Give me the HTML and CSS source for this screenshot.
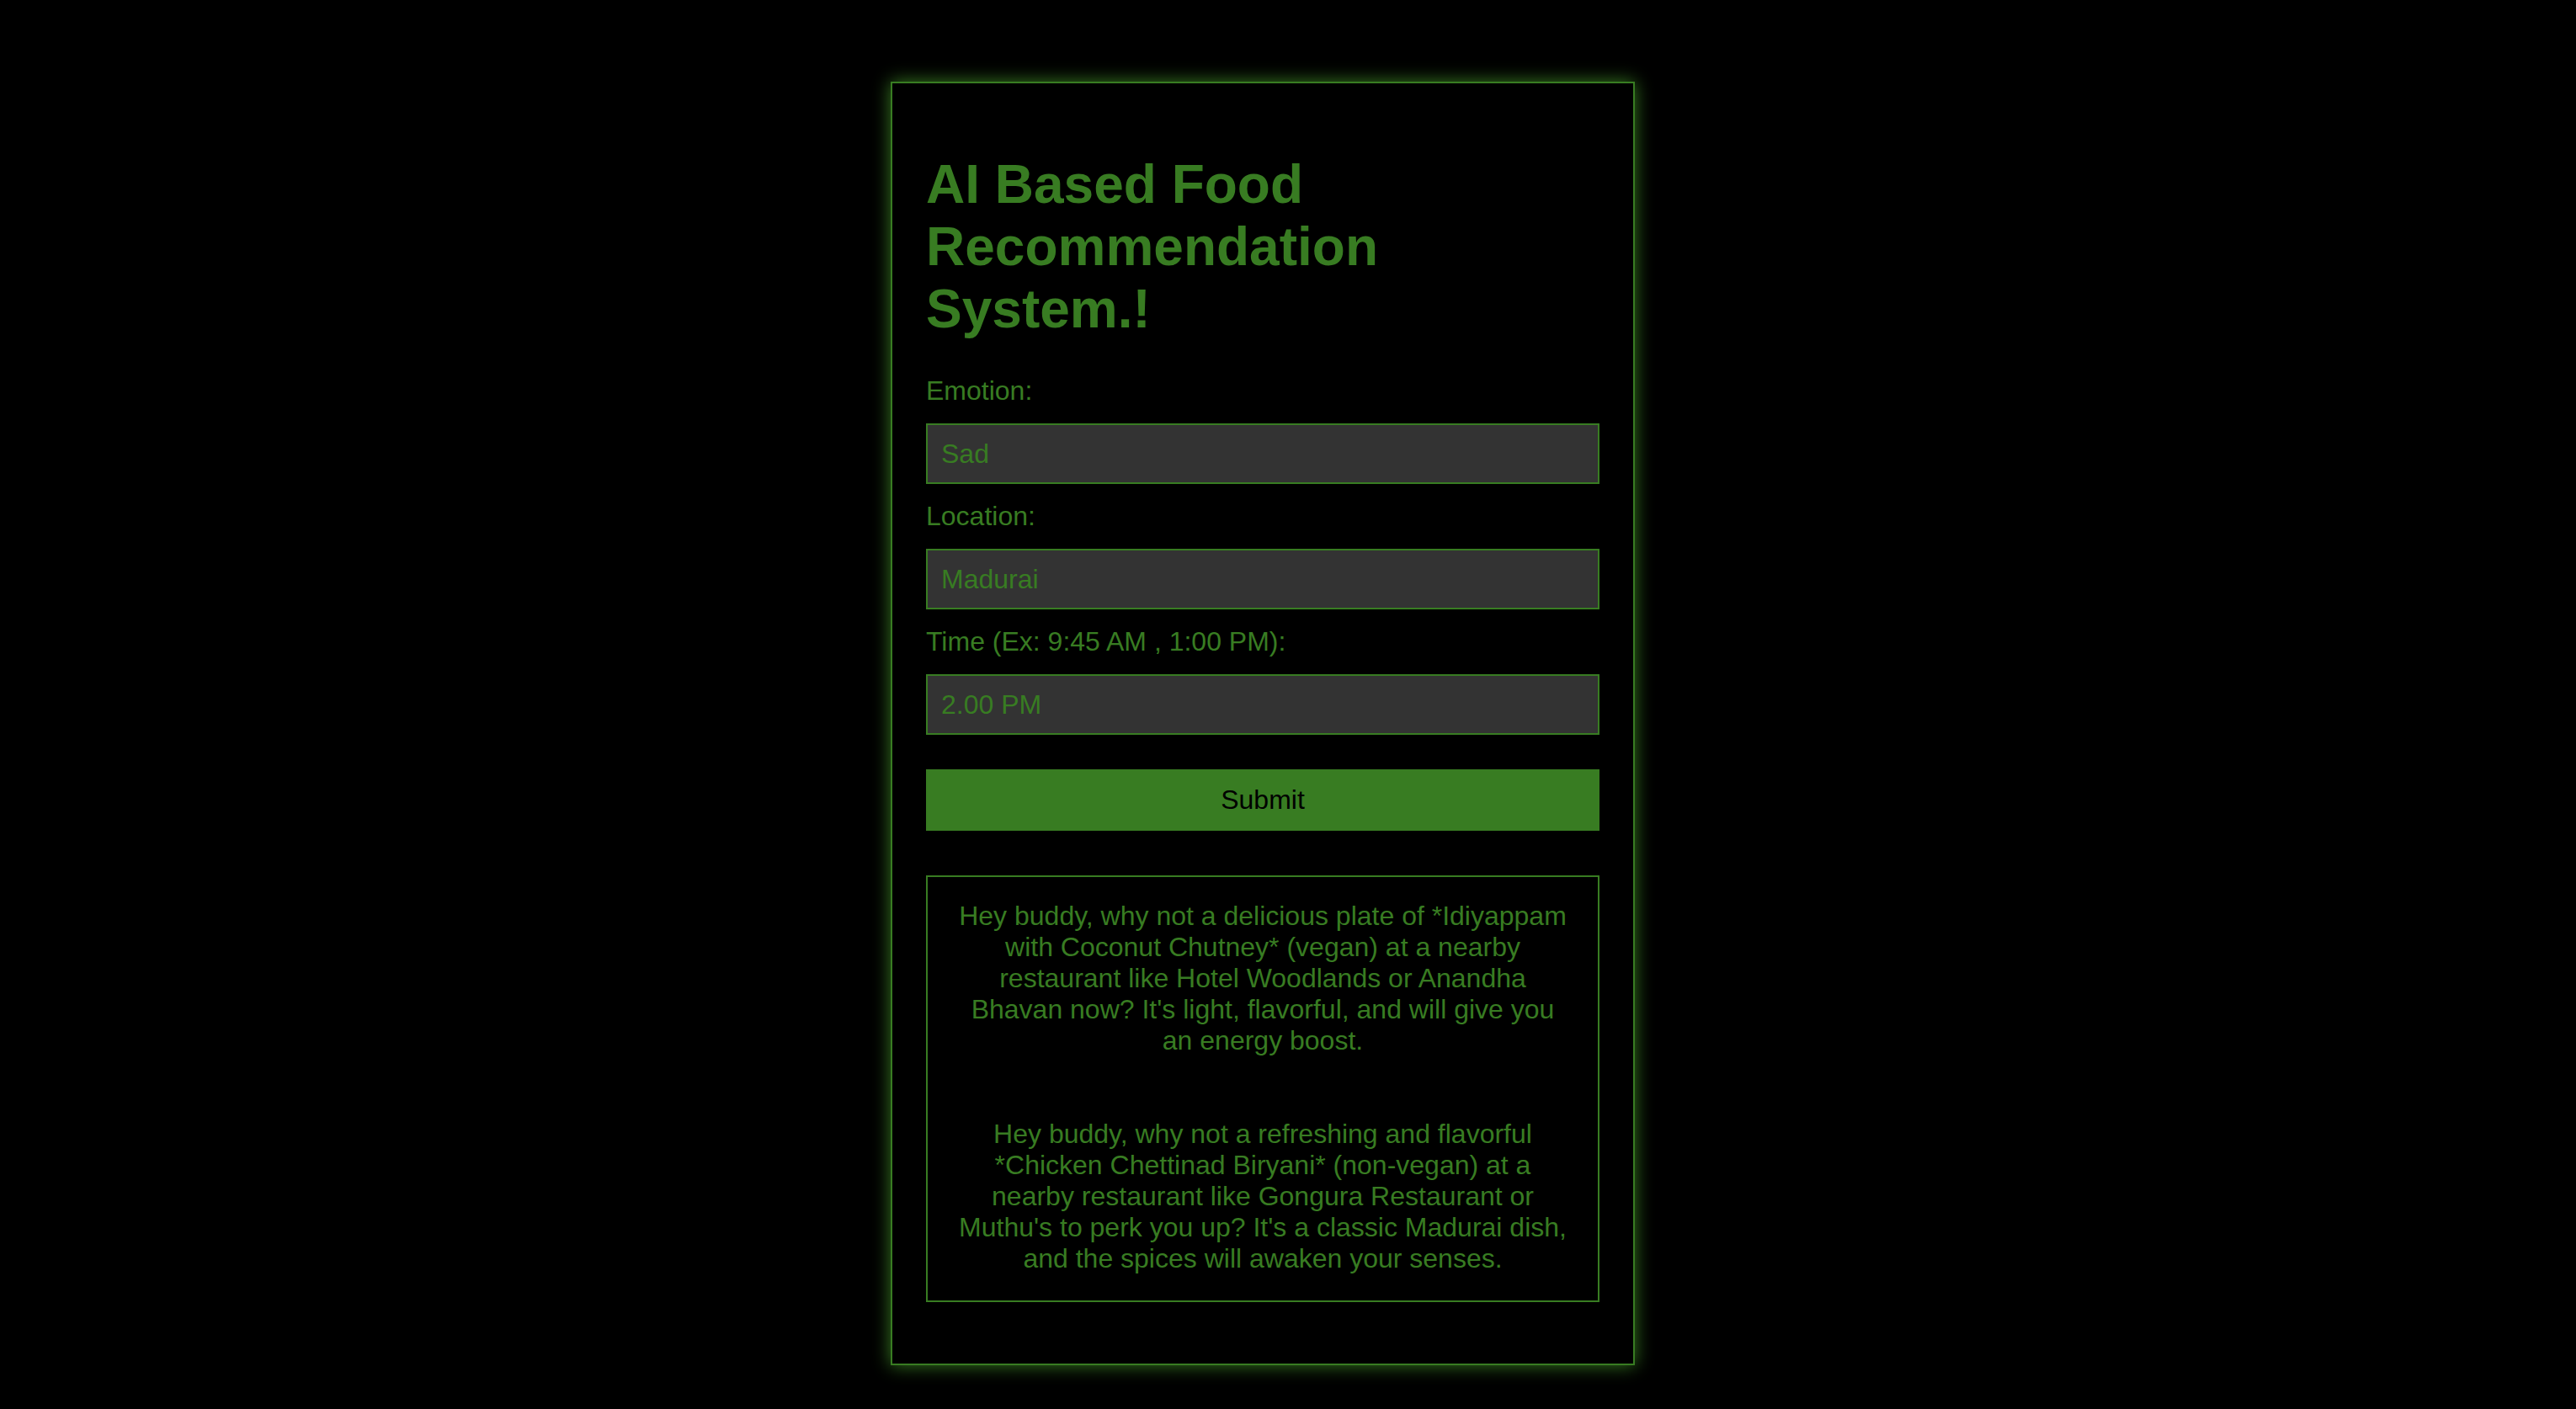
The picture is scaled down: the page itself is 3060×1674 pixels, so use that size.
FILE: index.html
```html
<!DOCTYPE html>
<html lang="en">
<head>
  <meta charset="UTF-8" />
  <meta name="viewport" content="width=device-width, initial-scale=1" />
  <title>AI Based Food Recommendation System</title>
  <link rel="stylesheet" href="styles.css">
</head>
<body>

<div class="container">
  <h1>AI Based Food Recommendation System.!</h1>

  <form class="food-form" onsubmit="return false;">
    <label for="emotion">Emotion:</label>
    <input type="text" id="emotion" name="emotion" value="Sad">

    <label for="location">Location:</label>
    <input type="text" id="location" name="location" value="Madurai">

    <label for="time">Time (Ex: 9:45 AM , 1:00 PM):</label>
    <input type="text" id="time" name="time" value="2.00 PM">

    <button type="submit">Submit</button>
  </form>

  <!-- results from the model -->
  <div class="result">
    <p>
      Hey buddy, why not a delicious plate of *Idiyappam with Coconut Chutney* (vegan) at a nearby restaurant like Hotel Woodlands or Anandha Bhavan now? It's light, flavorful, and will give you an energy boost.<br><br><br>Hey buddy, why not a refreshing and flavorful *Chicken Chettinad Biryani* (non-vegan) at a nearby restaurant like Gongura Restaurant or Muthu's to perk you up? It's a classic Madurai dish, and the spices will awaken your senses.
    </p>
  </div>
</div>

</body>
</html>
```

FILE: styles.css
```css
body {
  margin: 0;
  padding-right: 60px;
  background: #000;
  display: flex;
  justify-content: center;
  font-family: 'Liberation Sans', Arial, Helvetica, sans-serif;
  color: #387c22;
}

.container {
  width: 800px;
  padding: 40px;
  margin: 97px 0 50px;
  border: 2px solid #387c22;
  box-shadow: 0 0 20px #387c22;
}

h1 {
  font-size: 64px;
  font-weight: bold;
  margin: 43px 0 42px;
}

label {
  display: block;
  font-size: 32px;
}

input {
  display: block;
  width: 100%;
  box-sizing: border-box;
  margin: 20px 0;
  padding: 16px 16px 15px;
  border: 2px solid #387c22;
  background: #333;
  color: #387c22;
  font-family: 'Liberation Sans', Arial, sans-serif;
  font-size: 32px;
  outline: none;
}

button {
  display: block;
  width: 100%;
  margin-top: 41px;
  padding: 16px;
  border: 2px solid #387c22;
  background: #387c22;
  color: #000;
  font-family: 'Liberation Sans', Arial, sans-serif;
  font-size: 32px;
  cursor: pointer;
}

/* answer box */
.result {
  margin: 53px 0 33px;
  padding: 28px 33px 31px;
  border: 2px solid #387c22;
  text-align: center;
  font-size: 32px;
}

.result p {
  margin: 0;
}
```
